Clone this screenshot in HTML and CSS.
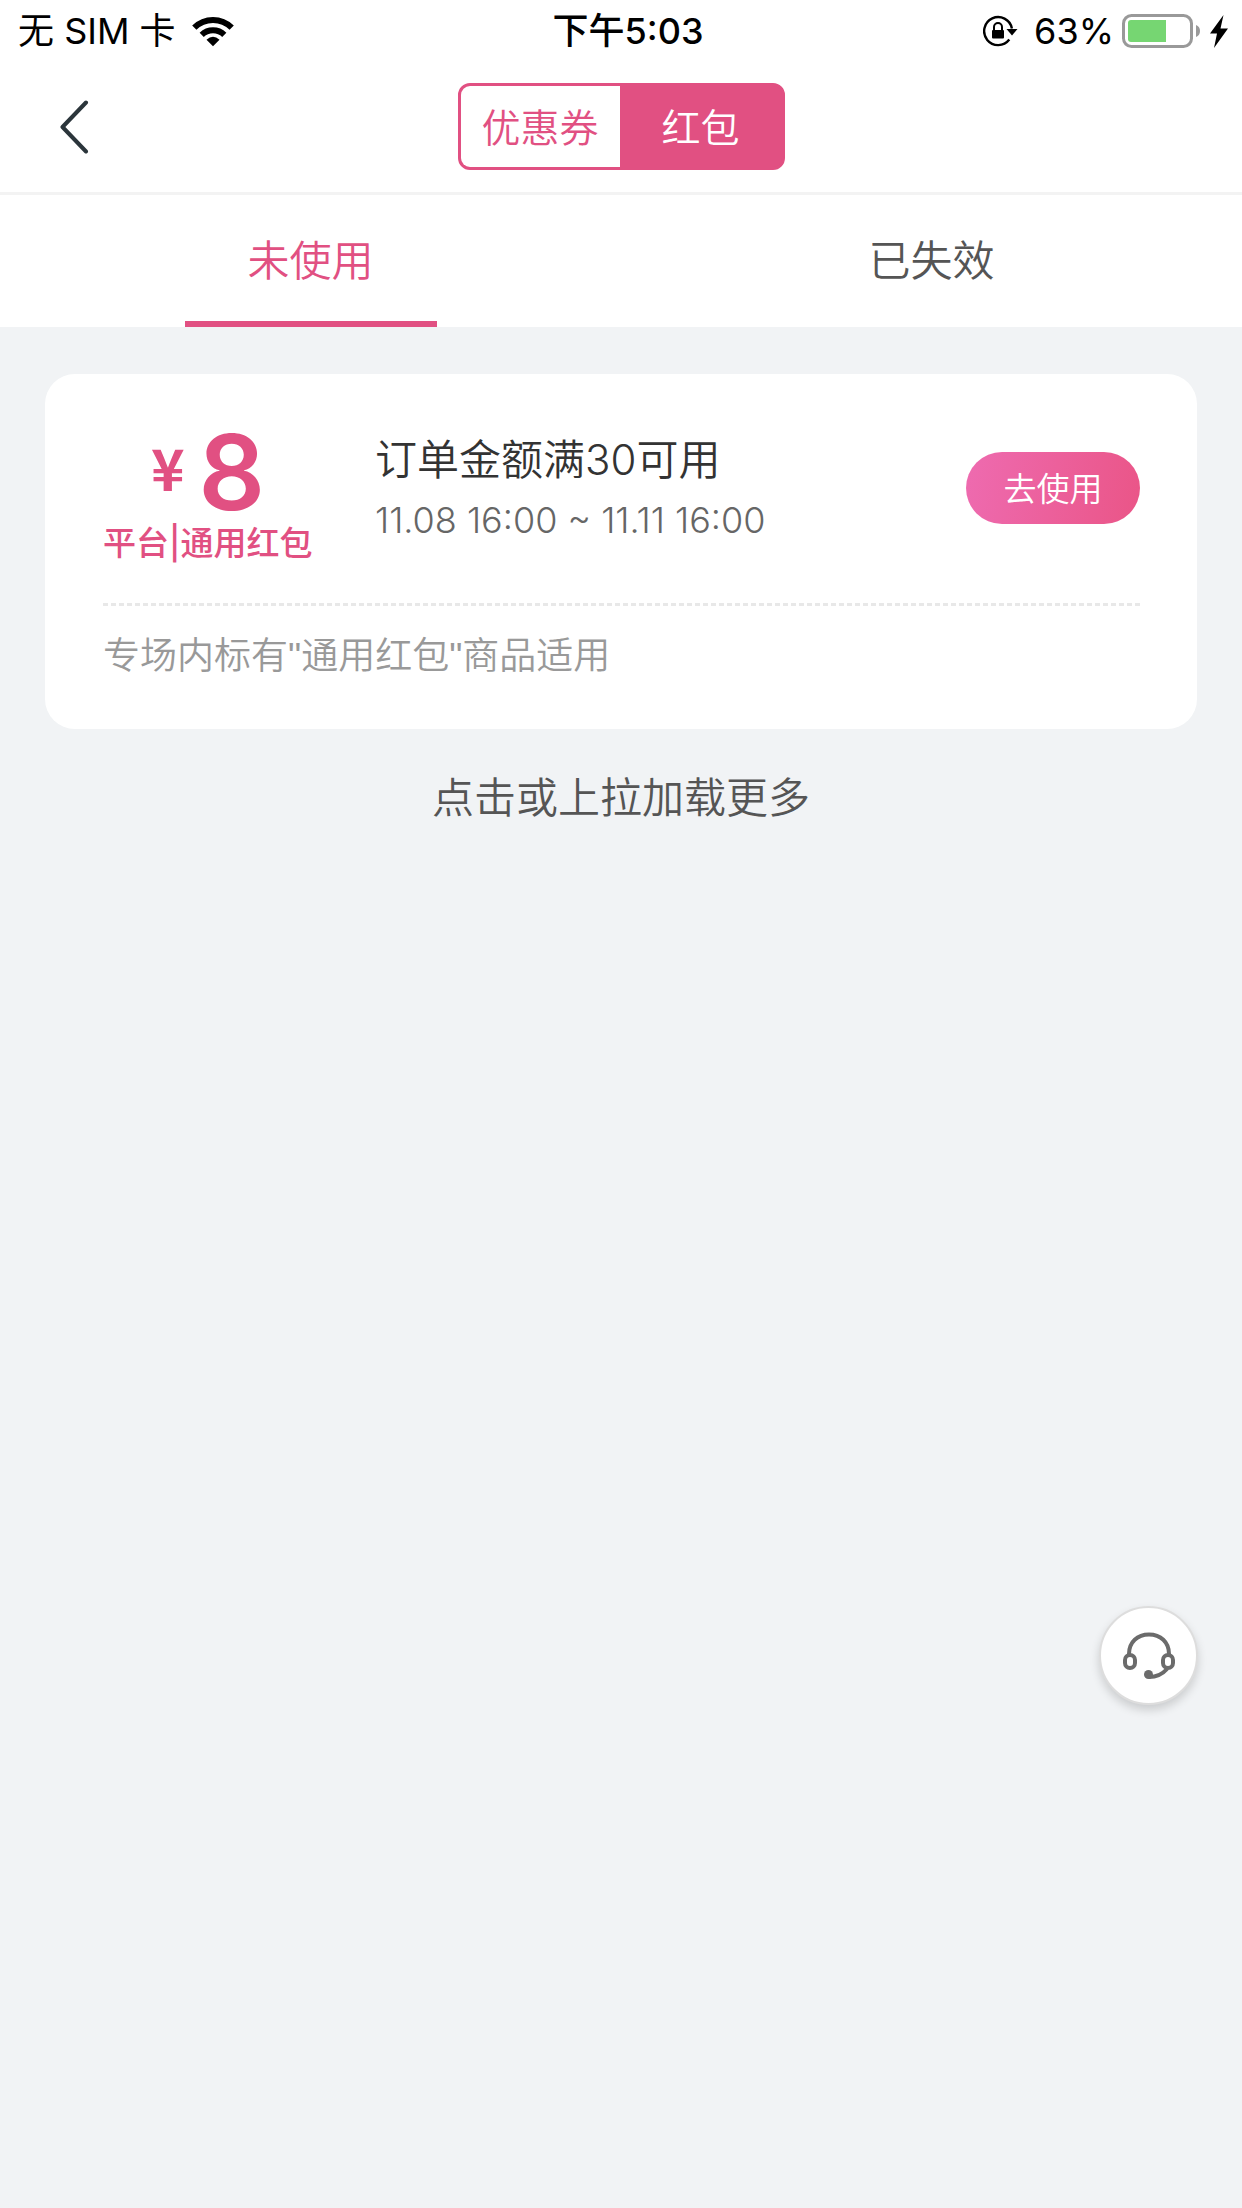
FILE: index.html
```
<!DOCTYPE html>
<html lang="zh-CN">
<head>
  <meta charset="utf-8">
  <meta name="viewport" content="width=device-width, initial-scale=1">
  <title>红包</title>
  <link rel="stylesheet" href="styles.css">
</head>
<body>
  <div class="status">
    <div class="status-left">
      <span>无 SIM 卡</span>
      <svg class="wifi" width="42" height="31" viewBox="0 0 42 31" fill="none" stroke="#000" stroke-width="6">
        <path d="M2.300 11.700A26.500 26.500 0 0 1 39.700 11.700"/>
        <path d="M9.700 18.900A16.300 16.300 0 0 1 32.300 18.900"/>
        <path d="M14.500 23.700Q21 18 27.500 23.700L21 30.200Z" fill="#000" stroke="none"/>
      </svg>
    </div>
    <div class="status-time">下午5:03</div>
    <div class="status-right">
      <svg width="35" height="32" viewBox="0 0 35 32" fill="none">
        <path d="M26.300 24.600A14 14 0 1 1 28.900 13.500" stroke="#000" stroke-width="2.400"/>
        <path d="M23.500 14H34.500L29 20.500Z" fill="#000"/>
        <rect x="9" y="15" width="12" height="8.500" rx="1" fill="#000"/>
        <path d="M11 15V12a4 4 0 0 1 8 0v3" stroke="#000" stroke-width="2"/>
      </svg>
      <span class="percent">63%</span>
      <svg width="78" height="34" viewBox="0 0 78 34">
        <rect x="1.500" y="1.500" width="68" height="31" rx="8" fill="#fff" stroke="#999" stroke-width="3"/>
        <path d="M9 6H44V28H9Q6 28 6 25V9Q6 6 9 6Z" fill="#76d672"/>
        <path d="M74 11Q78 12.500 78 17T74 23Z" fill="#999"/>
      </svg>
      <svg class="bolt" width="18" height="33" viewBox="0 0 18 33">
        <path d="M13.500 0L0 18.500H7L4 33L18 13.500H10.500Z" fill="#000"/>
      </svg>
    </div>
  </div>

  <header class="nav">
    <button class="back" type="button" aria-label="返回">
      <svg width="30" height="54" viewBox="0 0 30 54" fill="none" stroke="#2b353b" stroke-width="4" stroke-linecap="round" stroke-linejoin="round">
        <path d="M26 2.500L2.500 27L26 51.500"/>
      </svg>
    </button>
    <div class="switch">
      <button class="switch-item" type="button">优惠券</button>
      <button class="switch-item is-on" type="button">红包</button>
    </div>
  </header>

  <nav class="tabs">
    <a class="tab is-active" href="#unused">未使用</a>
    <a class="tab" href="#expired">已失效</a>
  </nav>

  <main class="list">
    <article class="coupon">
      <div class="coupon-main">
        <div class="value">
          <div class="amount"><span class="yen">¥</span><span class="number">8</span></div>
          <div class="kind">平台|通用红包</div>
        </div>
        <div class="info">
          <h2 class="title">订单金额满30可用</h2>
          <p class="period">11.08 16:00 ~ 11.11 16:00</p>
        </div>
        <button class="use" type="button">去使用</button>
      </div>
      <p class="note">专场内标有"通用红包"商品适用</p>
    </article>
    <button class="more" type="button">点击或上拉加载更多</button>
  </main>

  <button class="service" type="button" aria-label="客服">
    <svg width="52" height="48" viewBox="0 0 52 48" fill="none" stroke="#6b6b6b" stroke-width="4">
      <path d="M6 22C6 10 14.500 2.500 26 2.500S46 10 46 22"/>
      <rect x="2" y="23" width="10" height="13" rx="5"/>
      <rect x="40" y="23" width="10" height="13" rx="5"/>
      <path d="M44 37Q37 45 26 45"/>
      <circle cx="25.500" cy="42.500" r="4.500" fill="#6b6b6b" stroke="none"/>
    </svg>
  </button>
</body>
</html>
```
FILE: styles.css
```
* {
  box-sizing: border-box;
}

body {
  margin: 0;
  min-height: 100vh;
  background: #f1f3f5;
  color: #333;
  font-family: Inter, "Noto Sans CJK SC", sans-serif;
  font-weight: 350;
}

button {
  margin: 0;
  padding: 0;
  border: 0;
  background: none;
  color: inherit;
  font: inherit;
  cursor: pointer;
}

svg {
  display: block;
}

/* Status bar */
.status {
  display: grid;
  grid-template-columns: 1fr auto 1fr;
  align-items: center;
  height: 60px;
  padding: 0 14px 0 18px;
  background: #fff;
  color: #000;
  font-size: 36px;
  font-weight: 400;
  line-height: 62px;
}

.status-left,
.status-right {
  display: flex;
  align-items: center;
}

.status-left {
  gap: 16px;
}

.status-right {
  justify-content: flex-end;
}

.status-time {
  padding-left: 10px;
  font-weight: 500;
}

.percent {
  margin: 0 8px 0 16px;
}

.bolt {
  margin-left: 10px;
}

/* Title bar */
.nav {
  display: grid;
  grid-template-columns: 1fr auto 1fr;
  align-items: center;
  padding: 23px 60px 22px;
  border-bottom: 3px solid #f3f3f3;
  background: #fff;
}

.back {
  justify-self: start;
}

.switch {
  display: flex;
  border: 3px solid #e15082;
  border-radius: 12px;
  background: #e15082;
}

.switch-item {
  width: 159px;
  height: 81px;
  padding-bottom: 4px;
  border-radius: 9px 0 0 9px;
  background: #fff;
  color: #e15082;
  font-size: 39px;
}

.switch-item.is-on {
  width: 162px;
  background: #e15082;
  color: #fff;
  border-radius: 0 9px 9px 0;
}

/* Tabs */
.tabs {
  display: flex;
  background: #fff;
}

.tab {
  display: flex;
  flex: 1;
  flex-direction: column;
  align-items: center;
  padding-top: 6px;
  color: #555;
  font-size: 42px;
  line-height: 120px;
  text-decoration: none;
}

.tab::after {
  width: 252px;
  height: 6px;
  content: "";
}

.tab.is-active {
  color: #e15082;
}

.tab.is-active::after {
  background: #e15082;
}

/* Coupon list */
.list {
  display: flex;
  flex-direction: column;
  gap: 36px;
  padding: 47px 45px;
}

.coupon {
  padding: 50px 57px 44px 58px;
  border-radius: 30px;
  background: #fff;
}

.coupon-main {
  display: flex;
  align-items: flex-start;
  padding-bottom: 36px;
}

.value {
  width: 272px;
  color: #e15082;
}

.amount {
  display: flex;
  align-items: flex-start;
  justify-content: center;
  gap: 14px;
  width: 210px;
  height: 95px;
}

.yen {
  font-family: "Noto Sans CJK SC", sans-serif;
  font-size: 57px;
  font-weight: 700;
  line-height: 84px;
}

.number {
  font-size: 104px;
  font-weight: 600;
  line-height: 96px;
}

.kind {
  font-size: 33px;
  font-weight: 500;
  line-height: 48px;
  white-space: nowrap;
}

.info {
  flex: 1;
  padding-top: 6px;
}

.title {
  margin: 0;
  font-size: 42px;
  font-weight: inherit;
  line-height: 60px;
}

.period {
  margin: 0;
  color: #666;
  font-size: 36px;
  line-height: 60px;
}

.use {
  width: 174px;
  height: 72px;
  margin-top: 28px;
  padding-bottom: 2px;
  border-radius: 36px;
  background: linear-gradient(100deg, #ee6bb0, #ea5587);
  color: #fff;
  font-size: 33px;
}

.note {
  margin: 0;
  padding-top: 26px;
  background: repeating-linear-gradient(90deg, #e8e8e8 0 5px, #fff 5px 8px) top / 100% 3px no-repeat;
  color: #999;
  font-family: "Liberation Sans", "Noto Sans CJK SC", sans-serif;
  font-size: 37px;
  line-height: 56px;
}

.more {
  align-self: center;
  color: #555;
  font-size: 42px;
  line-height: 66px;
}

/* Floating customer service button */
.service {
  display: flex;
  position: fixed;
  right: 44px;
  bottom: 503px;
  align-items: center;
  justify-content: center;
  width: 99px;
  height: 99px;
  border: 2px solid #ddd;
  border-radius: 50%;
  background: #fff;
  box-shadow: 0 5px 10px rgba(0, 0, 0, 0.16);
}
```
